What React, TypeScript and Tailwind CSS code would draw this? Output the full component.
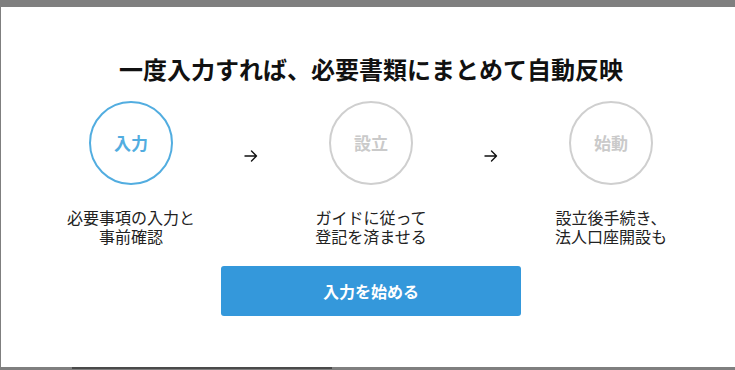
import React from "react";

const font = { fontFamily: '"Noto Sans CJK JP", "Noto Sans", sans-serif' };

function Arrow() {
  return (
    <div className="w-[80px] flex justify-center pt-[49px]">
      <svg width="14" height="12" viewBox="0 0 14 12" fill="none" stroke="#111" strokeWidth="1.4" strokeLinecap="round" strokeLinejoin="round">
        <path d="M1 6H12.5M7.5 1L12.5 6L7.5 11" />
      </svg>
    </div>
  );
}

function Step({ label, lines, active }: { label: string; lines: [string, string]; active?: boolean }) {
  return (
    <div className="w-[160px] flex flex-col items-center">
      <div
        className={
          active
            ? "w-[84px] h-[84px] rounded-full border-2 border-[#52ade0] flex items-center justify-center text-[17px] font-bold text-[#52ade0]"
            : "w-[84px] h-[84px] rounded-full border-2 border-[#cfcfcf] flex items-center justify-center text-[17px] font-bold text-[#cacaca]"
        }
      >
        {label}
      </div>
      <p className="mt-[23px] text-[16px] leading-[19px] text-[#222] text-center whitespace-nowrap">
        {lines[0]}
        <br />
        {lines[1]}
      </p>
    </div>
  );
}

export default function App() {
  return (
    <div className="w-full h-[370px] bg-[#7f7f7f] overflow-hidden relative flex pt-[7px] pl-[1px]" style={font}>
      <div className="absolute left-[72px] top-[367px] w-[260px] h-[2px] bg-[#4a4a4a]" />
      <div className="relative shrink-0 w-[740px] h-[360px] bg-white flex flex-col items-center pt-[46px]">
        <h2 className="text-[24px] leading-[32px] font-bold text-[#111]">一度入力すれば、必要書類にまとめて自動反映</h2>
        <div className="mt-[16px] flex">
          <Step label="入力" lines={["必要事項の入力と", "事前確認"]} active />
          <Arrow />
          <Step label="設立" lines={["ガイドに従って", "登記を済ませる"]} />
          <Arrow />
          <Step label="始動" lines={["設立後手続き、", "法人口座開設も"]} />
        </div>
        <button className="mt-[20px] w-[300px] h-[50px] rounded-[3px] bg-[#3498db] text-white text-[16px] font-bold">
          入力を始める
        </button>
      </div>
    </div>
  );
}
